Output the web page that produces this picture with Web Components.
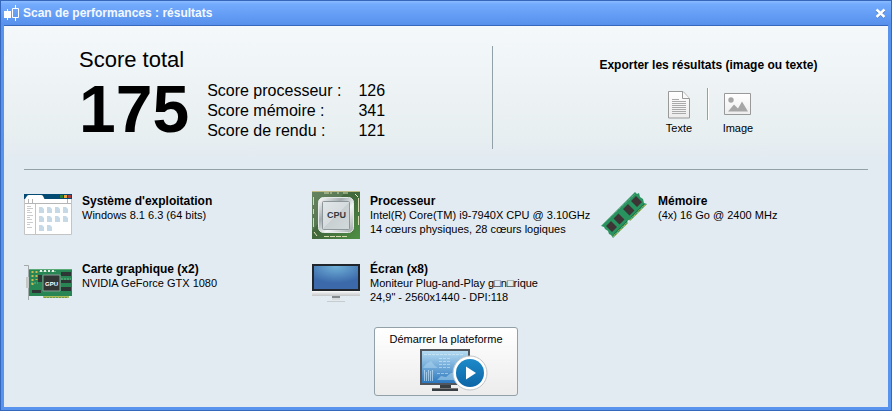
<!DOCTYPE html>
<html lang="fr">
<head>
<meta charset="utf-8">
<title>Scan de performances : résultats</title>
<style>
    body{
        margin:0;
        min-height:100vh;
        display:flex;
        font-family:"Liberation Sans", Arial, sans-serif;
        font-size:11px;
        line-height:14px;
        color:#000;
    }
    app-window{
        flex:1;
    }
    .top{
        display:grid;
        grid-template-columns:5fr 4fr;
        padding:20px 0;
        border-bottom:1px solid #92a0a8;
    }
    .specs{
        display:grid;
        grid-template-columns:288px 288px 1fr;
        grid-auto-rows:minmax(48px, auto);
        row-gap:20px;
        padding:21px 0 20px;
    }
    launch-button{
        align-self:center;
    }
</style>
</head>
<body>
<app-window>
    <span slot="title">Scan de performances : résultats</span>
    <div class="top">
        <score-summary total="175" cpu="126" memory="341" render="121"></score-summary>
        <export-panel></export-panel>
    </div>
    <div class="specs">
        <spec-item icon="os">
            <span slot="title">Système d'exploitation</span>
            <div>Windows 8.1 6.3 (64 bits)</div>
        </spec-item>
        <spec-item icon="cpu">
            <span slot="title">Processeur</span>
            <div>Intel(R) Core(TM) i9-7940X CPU @ 3.10GHz</div>
            <div>14 cœurs physiques, 28 cœurs logiques</div>
        </spec-item>
        <spec-item icon="memory">
            <span slot="title">Mémoire</span>
            <div>(4x) 16 Go @ 2400 MHz</div>
        </spec-item>
        <spec-item icon="gpu">
            <span slot="title">Carte graphique (x2)</span>
            <div>NVIDIA GeForce GTX 1080</div>
        </spec-item>
        <spec-item icon="screen">
            <span slot="title">Écran (x8)</span>
            <div>Moniteur Plug-and-Play g□n□rique</div>
            <div>24,9" - 2560x1440 - DPI:118</div>
        </spec-item>
    </div>
    <launch-button>Démarrer la plateforme</launch-button>
</app-window>

<script>
const ICONS = {
    logo:`<svg width="15" height="16" viewBox="0 0 15 16" fill="#fff">
        <path d="M0 6h7v7H0zM3 4h1v11H3zM11 0h1v3h-1zM11 13h1v3h-1z"/>
        <path d="M8.5 3.5h6v9h-6z" fill="none" stroke="#fff"/>
    </svg>`,

    close:`<svg width="11" height="11" viewBox="0 0 11 11" fill="none" stroke-width="2.4">
        <path d="M1.5 2.5l8 7M9.5 2.5l-8 7" stroke="#3c68b0"/>
        <path d="M1.5 1.5l8 7.5M9.5 1.5l-8 7.5" stroke="#fff"/>
    </svg>`,

    text:`<svg width="28" height="28" viewBox="0 0 28 28">
        <defs><linearGradient id="p" x2="0" y2="1"><stop stop-color="#fff"/><stop offset="1" stop-color="#ececec"/></linearGradient></defs>
        <path d="M3.5.5h14.5l6.5 7v19.500h-21z" fill="url(#p)" stroke="#999"/>
        <path d="M17.500.5v7h7" fill="#fafafa" stroke="#999"/>
        <path d="M7 8.500h7M7 10.500h14M7 12.500h14M7 14.500h14M7 16.500h14M7 18.500h14M7 20.500h14M7 22.500h14" stroke="#a9a9a9"/>
    </svg>`,

    image:`<svg width="28" height="28" viewBox="0 0 28 28">
        <defs><linearGradient id="p" x2="0" y2="1"><stop stop-color="#fff"/><stop offset="1" stop-color="#eee"/></linearGradient></defs>
        <path d="M.5 2.500h26v21H.5z" fill="url(#p)" stroke="#999"/>
        <circle cx="7" cy="9" r="2.700" fill="#a6a6a6"/>
        <path d="M4 20.500l6-7 4 4 4-7 6 10z" fill="#a6a6a6"/>
    </svg>`,

    os:`<svg width="48" height="48" viewBox="0 0 48 48">
        <path d="M.5 4h47v39.500H.5z" fill="#fff" stroke="#c4c4c4"/>
        <path d="M0 3h48v5H0z" fill="#034b73"/>
        <path d="M1 8l2-3q.5-1 2-1h12q1.500 0 2 1l1.500 3z" fill="#fff"/>
        <path d="M36 4h3v3h-3z" fill="#2d7f2e"/><path d="M40 4h3v3h-3z" fill="#e9a33c"/><path d="M44 4h3v3h-3z" fill="#a33b3b"/>
        <path d="M1 12.500h46M4.500 8v4M8.500 8v4M43.500 8v4" stroke="#b5b5b5"/>
        <path d="M11.500 13v30" stroke="#c4c4c4"/>
        <path d="M3 15.500h4M3 17.500h6M3 19.500h3M3 21.500h5M3 24.500h6M3 26.500h3M3 28.500h5M3 31.500h6M3 33.500h3M3 36.500h5" stroke="#ccc"/>
        <path d="M15 16h3l2 2v4h-5zM23 16h3l2 2v4h-5zM31 16h3l2 2v4h-5zM39 16h3l2 2v4h-5zM15 25h3l2 2v4h-5zM23 25h3l2 2v4h-5zM31 25h3l2 2v4h-5zM39 25h3l2 2v4h-5zM15 34h3l2 2v4h-5zM23 34h3l2 2v4h-5z" fill="#c5dae6"/>
    </svg>`,

    cpu:`<svg width="48" height="48" viewBox="0 0 48 48">
        <defs>
            <linearGradient id="b" x1="0" y1="0" x2="1" y2="1"><stop stop-color="#55764f"/><stop offset=".5" stop-color="#41673b"/><stop offset="1" stop-color="#4e9143"/></linearGradient>
            <linearGradient id="m" x1="0" y1="0" x2="1" y2="1"><stop stop-color="#fff"/><stop offset=".35" stop-color="#a5adb0"/><stop offset=".6" stop-color="#f4f6f6"/><stop offset="1" stop-color="#a0a7a8"/></linearGradient>
            <linearGradient id="f" x1="0" y1="0" x2="1" y2="1"><stop stop-color="#e2e7e9"/><stop offset=".5" stop-color="#d6dcde"/><stop offset=".5" stop-color="#c8d0d1"/><stop offset="1" stop-color="#d2d9da"/></linearGradient>
        </defs>
        <path d="M0 0h48v48H0z" fill="url(#b)"/>
        <path d="M0 0h34L0 40z" fill="#fff" opacity=".1"/>
        <path d="M12 2h8M25 2h2M31 2h5M12 45.500h24" stroke="#d5dbae" stroke-dasharray="5 1"/>
        <path d="M1.500 6v8M1.500 18v5M1.500 27v9M46.500 7v14M46.500 25v9" stroke="#d5dbae"/>
        <path d="M0 .5h48" stroke="#c1b982"/>
        <path d="M2 41l3 4M43 3l3 3" stroke="#e5e8c0"/>
        <rect x="6.500" y="6.500" width="35" height="35" rx="5" fill="url(#m)" stroke="#e6e9e9"/>
        <rect x="10.500" y="10.500" width="27" height="28" rx="1" fill="url(#f)" stroke="#8d9699"/>
        <text x="24.500" y="27" text-anchor="middle" font-size="9" font-weight="bold" fill="#333a3c">CPU</text>
    </svg>`,

    memory:`<svg width="48" height="48" viewBox="0 0 48 48">
        <path d="M1 35L35 1l2 2 2-1 1 4 3 2 1 4 3 1-34 34-2-3-2-1-1-3-3-2-1-2z" fill="#299360"/>
        <path d="M3 33L35 3" stroke="#82b695" stroke-dasharray="1 1"/>
        <path d="M13 46L46 13" stroke="#b9b04b" stroke-width="1.500" stroke-dasharray="1 1"/>
        <path d="M14 43L27 30M31 26L44 13" stroke="#187849"/>
        <path d="M6 35l5-5 6 6-5 5zM13.500 27.500l5-5 6 6-5 5zM23 18l5-5 6.500 6.500-5 5zM31 10l5-5 6 6-5 5z" fill="#3c3435"/>
        <circle cx="29" cy="30.500" r="1.500" fill="#e3ebf2"/>
    </svg>`,

    gpu:`<svg width="48" height="48" viewBox="0 0 48 48">
        <path d="M0 6.500h4.500V41" fill="none" stroke="#a3a8a8"/>
        <path d="M2 18h3v11H2z" fill="#c5c7c6"/>
        <path d="M5 10h43v27H5z" fill="#278653"/>
        <path d="M5 10.500h43" stroke="#58aa76"/>
        <path d="M19 37h26v2H19z" fill="#a9ba58"/><path d="M20 38.500h24" stroke="#6c9b4f" stroke-dasharray="2 1"/>
        <path d="M15 12.500h18M7 24h7M34 20h13M34 29h13" stroke="#6cb287" stroke-dasharray="2 1"/>
        <path d="M8.500 12v16M12.500 12v9" stroke="#c8ba55" stroke-width="2" stroke-dasharray="2 2"/>
        <path d="M16 12h2M20 12h2M24 12h2M28 12h2" stroke="#e8eee6" stroke-width="2"/>
        <path d="M37 13h10v4H37zM37 21h10v3H37zM37 28h10v4H37zM8 31h9v3H8zM14 16h4v7h-4z" fill="#2d3634"/>
        <path d="M19 16h17v16H19z" fill="#313635" stroke="#8a9993"/>
        <text x="27.500" y="27" text-anchor="middle" font-size="6" font-weight="bold" fill="#fff">GPU</text>
    </svg>`,

    screen:`<svg width="48" height="48" viewBox="0 0 48 48">
        <defs>
            <radialGradient id="s" cx=".5" cy="0" r=".75"><stop stop-color="#71b2d9"/><stop offset="1" stop-color="#3b69aa"/></radialGradient>
            <linearGradient id="g" x2="0" y2="1"><stop stop-color="#fafafa"/><stop offset="1" stop-color="#c3c5c7"/></linearGradient>
        </defs>
        <path d="M0 5h48v27H0z" fill="#20262c"/>
        <path d="M2 7h44v23H2z" fill="url(#s)"/>
        <path d="M0 32h48v5H0z" fill="url(#g)"/>
        <path d="M20 37h8v4h-8z" fill="#84898c"/><path d="M20 39h8v2h-8z" fill="#d8dadb"/>
        <path d="M15 42.500h18" stroke="#c7cccf"/>
    </svg>`,

    platform:`<svg width="84" height="44" viewBox="-14 0 84 44">
        <defs>
            <linearGradient id="s" x2="0" y2="1"><stop stop-color="#b5dbf2"/><stop offset="1" stop-color="#2b77be"/></linearGradient>
            <linearGradient id="c" x2="0" y2="1"><stop stop-color="#1d8ac9"/><stop offset="1" stop-color="#0d65a6"/></linearGradient>
        </defs>
        <path d="M2 1h50v36H2z" fill="#50565b"/>
        <path d="M4 3h46v32H4z" fill="url(#s)"/>
        <path d="M5 20l3-4 5-3 3 4 4 3zM19 32l4-4 5 1 5-4h15v7z" fill="#a6d2ed" opacity=".6"/>
        <path d="M6.500 22v11M8.500 24v9M10.500 22v11M12.500 23v10M14.500 22v11" stroke="#d6edf8" opacity=".6"/>
        <path d="M6 6.500h39M21 10.500h12M21 13.500h12M21 16.500h12M21 19.500h12M19 25.500h12" stroke="#e0f2fb" stroke-dasharray="3 1" opacity=".5"/>
        <path d="M37 10v11M41 8v13M45 11v10" stroke="#8fc0e2" stroke-dasharray="2 1"/>
        <path d="M22 37h11v3h7v3H14v-3h8z" fill="#3a3f43"/>
        <path d="M14 40.500h26" stroke="#777"/>
        <circle cx="52" cy="25" r="17" fill="#fff" stroke="#bfc4c6"/>
        <circle cx="52" cy="25" r="14" fill="url(#c)"/>
        <path d="M48 18.500l10 6.500-10 6.500z" fill="#fff"/>
    </svg>`
};

class UiIcon extends HTMLElement{
    connectedCallback(){
        this.attachShadow({mode:"open"}).innerHTML = `
        <style>
            :host{ display:block; flex:none; }
            svg{ display:block; }
        </style>
        ${ICONS[this.getAttribute("name")]}
        `;
    }
}

class AppWindow extends HTMLElement{
    connectedCallback(){
        this.attachShadow({mode:"open"}).innerHTML = `
        <style>
            :host{
                display:flex;
                flex-direction:column;
                box-sizing:border-box;
                border:1px solid #3567bd;
                background:#5894ee;
                padding:0 3px 3px;
            }
            header{
                display:flex;
                align-items:center;
                gap:4px;
                height:24px;
                margin:0 -3px;
                padding:0 5px 0 3px;
                box-sizing:border-box;
                background:linear-gradient(#8bbcff, #73abfd 3px, #5690ec);
                color:#f4f8ff;
            }
            h1{
                flex:1;
                margin:0;
                font-size:12px;
                line-height:14px;
            }
            button{
                border:0;
                padding:0;
                background:none;
            }
            main{
                flex:1;
                display:flex;
                flex-direction:column;
                border-top:1px solid #3567bd;
                padding:0 20px 11px;
                background:linear-gradient(#f4f8fa, #e8eff1 108px, #e3ebf2 132px);
            }
        </style>
        <header>
            <ui-icon name="logo"></ui-icon>
            <h1><slot name="title"></slot></h1>
            <button type="button" aria-label="Fermer"><ui-icon name="close"></ui-icon></button>
        </header>
        <main><slot></slot></main>
        `;
    }
}

class ScoreSummary extends HTMLElement{
    connectedCallback(){
        this.attachShadow({mode:"open"}).innerHTML = `
        <style>
            :host{
                display:block;
                padding:0 0 6px 55px;
                border-right:1px solid #92a0a8;
            }
            h2{
                margin:0;
                font-size:22px;
                line-height:28px;
                font-weight:normal;
            }
            .row{
                display:flex;
                align-items:flex-start;
                gap:18px;
                margin-top:1px;
            }
            .total{
                font-size:66px;
                line-height:68px;
                font-weight:bold;
            }
            table{
                margin-top:6px;
                border-collapse:collapse;
                font-size:16px;
                line-height:20px;
            }
            th{
                padding:0 17px 0 0;
                font-weight:normal;
                text-align:left;
            }
            td{
                padding:0;
            }
        </style>
        <h2>Score total</h2>
        <div class="row">
            <div class="total">${this.getAttribute("total")}</div>
            <table>
                <tr><th scope="row">Score processeur :</th><td>${this.getAttribute("cpu")}</td></tr>
                <tr><th scope="row">Score mémoire :</th><td>${this.getAttribute("memory")}</td></tr>
                <tr><th scope="row">Score de rendu :</th><td>${this.getAttribute("render")}</td></tr>
            </table>
        </div>
        `;
    }
}

class ExportPanel extends HTMLElement{
    connectedCallback(){
        this.attachShadow({mode:"open"}).innerHTML = `
        <style>
            :host{
                display:flex;
                flex-direction:column;
                align-items:center;
                gap:16px;
                padding:12px 0 0 56px;
            }
            h2{
                margin:0;
                font-size:12px;
                line-height:14px;
            }
            .choices{
                display:flex;
            }
            .choices::before{
                content:"";
                order:1;
                width:1px;
                height:32px;
                background:#92a0a8;
                border-right:1px solid #fff;
            }
            button{
                display:flex;
                flex-direction:column;
                align-items:center;
                gap:2px;
                width:57px;
                padding:3px 0 0;
                border:0;
                background:none;
                font:inherit;
                color:inherit;
            }
            button:last-child{
                order:2;
            }
        </style>
        <h2>Exporter les résultats (image ou texte)</h2>
        <div class="choices">
            <button type="button"><ui-icon name="text"></ui-icon>Texte</button>
            <button type="button"><ui-icon name="image"></ui-icon>Image</button>
        </div>
        `;
    }
}

class SpecItem extends HTMLElement{
    connectedCallback(){
        this.attachShadow({mode:"open"}).innerHTML = `
        <style>
            :host{
                display:flex;
                align-items:flex-start;
                gap:10px;
            }
            .text{
                padding-top:3px;
            }
            h3{
                margin:0;
                font-size:12px;
                line-height:14px;
            }
        </style>
        <ui-icon name="${this.getAttribute("icon")}"></ui-icon>
        <div class="text">
            <h3><slot name="title"></slot></h3>
            <slot></slot>
        </div>
        `;
    }
}

class LaunchButton extends HTMLElement{
    connectedCallback(){
        this.attachShadow({mode:"open"}).innerHTML = `
        <style>
            :host{ display:block; }
            button{
                display:flex;
                flex-direction:column;
                align-items:center;
                gap:2px;
                padding:4px 14px 3px;
                border:1px solid #92a0a8;
                border-radius:3px;
                background:linear-gradient(#fff, #ececec);
                font:inherit;
                color:inherit;
            }
        </style>
        <button type="button"><slot></slot><ui-icon name="platform"></ui-icon></button>
        `;
    }
}

customElements.define('ui-icon',UiIcon);
customElements.define('app-window',AppWindow);
customElements.define('score-summary',ScoreSummary);
customElements.define('export-panel',ExportPanel);
customElements.define('spec-item',SpecItem);
customElements.define('launch-button',LaunchButton);
</script>
</body>
</html>
